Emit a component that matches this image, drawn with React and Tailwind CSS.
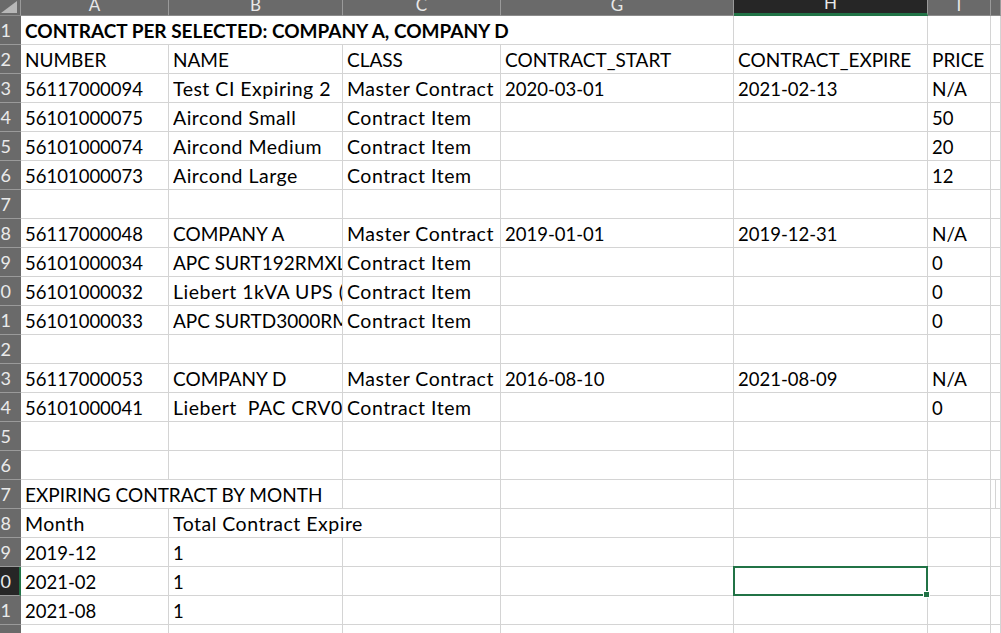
import React from 'react';

const FONT = "font-['Lato','Liberation_Sans',sans-serif]";

const colHeads = [
  { label: 'A', w: 'w-[148px]' },
  { label: 'B', w: 'w-[174px]' },
  { label: 'C', w: 'w-[158px]' },
  { label: 'G', w: 'w-[233px]' },
  { label: 'H', w: 'w-[194px]', selected: true },
  { label: 'I', w: 'w-[63px]' },
  { label: '', w: 'flex-1' },
];

const W = colHeads.map((c) => c.w);

const plain = (vals) => vals.map((v, i) => ({ text: v, w: W[i] }));

const rows = [
  [
    { text: 'CONTRACT PER SELECTED: COMPANY A, COMPANY D', w: 'w-[713px]', bold: true },
    { text: '', w: W[4] },
    { text: '', w: W[5] },
    { text: '', w: W[6] },
  ],
  plain(['NUMBER', 'NAME', 'CLASS', 'CONTRACT_START', 'CONTRACT_EXPIRE', 'PRICE', '']),
  plain(['56117000094', 'Test CI Expiring 2', 'Master Contract', '2020-03-01', '2021-02-13', 'N/A', '']),
  plain(['56101000075', 'Aircond Small', 'Contract Item', '', '', '50', '']),
  plain(['56101000074', 'Aircond Medium', 'Contract Item', '', '', '20', '']),
  plain(['56101000073', 'Aircond Large', 'Contract Item', '', '', '12', '']),
  plain(['', '', '', '', '', '', '']),
  plain(['56117000048', 'COMPANY A', 'Master Contract', '2019-01-01', '2019-12-31', 'N/A', '']),
  plain(['56101000034', 'APC SURT192RMXLT2U', 'Contract Item', '', '', '0', '']),
  plain(['56101000032', 'Liebert 1kVA UPS (GXT4-1000RT230)', 'Contract Item', '', '', '0', '']),
  plain(['56101000033', 'APC SURTD3000RMXLI', 'Contract Item', '', '', '0', '']),
  plain(['', '', '', '', '', '', '']),
  plain(['56117000053', 'COMPANY D', 'Master Contract', '2016-08-10', '2021-08-09', 'N/A', '']),
  plain(['56101000041', 'Liebert\u00a0 PAC CRV035RA', 'Contract Item', '', '', '0', '']),
  plain(['', '', '', '', '', '', '']),
  plain(['', '', '', '', '', '', '']),
  [
    { text: 'EXPIRING CONTRACT BY MONTH', w: 'w-[322px]' },
    ...plain(['', '', '', '', '', '']).map((c, i) => ({ ...c, w: W[i + 2] })),
  ],
  [
    { text: 'Month', w: W[0] },
    { text: 'Total Contract Expire', w: 'w-[332px]' },
    ...plain(['', '', '', '']).map((c, i) => ({ ...c, w: W[i + 3] })),
  ],
  plain(['2019-12', '1', '', '', '', '', '']),
  plain(['2021-02', '1', '', '', '', '', '']),
  plain(['2021-08', '1', '', '', '', '', '']),
  plain(['', '', '', '', '', '', '']),
];

// Calibri has narrow digits and roomy lowercase, so size the stand-in font per kind of text
function textClass(t) {
  if (/^[\d\-]+$/.test(t)) return 'text-[18.5px]';
  if (!/[a-z]/.test(t)) return 'text-[19px]';
  return 'text-[19.5px] tracking-[0.5px]';
}

function Cell({ cell, selected }) {
  return (
    <div className={`${cell.w} relative h-[29px] shrink-0 border-r border-b border-[#d4d4d4] pl-[4px] pt-[3px]`}>
      <span
        className={`block w-full h-[24px] overflow-hidden whitespace-nowrap text-black leading-[24px] ${textClass(cell.text)} ${
          cell.bold ? 'font-bold' : ''
        }`}
      >
        {cell.text}
      </span>
      {selected && (
        <div className="absolute -left-[1px] -top-[1px] -right-[1px] -bottom-[1px] border-2 border-[#217346] z-10">
          <div className="absolute -right-[4px] -bottom-[4px] w-[7px] h-[7px] bg-[#217346] border border-white"></div>
        </div>
      )}
    </div>
  );
}

export default function App() {
  return (
    <div className={`w-[1001px] h-[633px] overflow-hidden bg-white ${FONT}`}>
      {/* column header bar */}
      <div className="flex h-[16px]">
        <div className="w-[21px] shrink-0 bg-[#6a6a6a] border-b border-[#8c8c8c] border-r border-r-[#9a9a9a] relative">
          <svg width="20" height="15" className="absolute left-0 top-0">
            <polygon points="1,13 17,13 17,1" fill="#b8b8b8" />
          </svg>
        </div>
        {colHeads.map((c, i) => (
          <div
            key={i}
            className={`${c.w} shrink-0 h-[16px] flex items-end justify-center overflow-hidden border-r border-[#9a9a9a] ${
              c.selected ? 'bg-[#262626] border-b-[3px] border-b-[#217346]' : 'bg-[#6a6a6a] border-b border-b-[#8c8c8c]'
            }`}
          >
            <span className="text-[#e8e8e8] text-[17px] leading-none mb-[2px]">{c.label}</span>
          </div>
        ))}
      </div>

      {rows.map((row, r) => {
        const n = r + 1;
        const sel = n === 20;
        return (
          <div key={n} className="flex">
            <div
              className={`w-[21px] h-[29px] shrink-0 flex items-center justify-end overflow-hidden border-b ${
                sel ? 'bg-[#262626] border-[#9a9a9a] border-r-2 border-r-[#217346] pr-[8px]' : 'bg-[#6a6a6a] border-[#9a9a9a] pr-[10px]'
              }`}
            >
              <span className="text-[#eaeaea] text-[18px] leading-none whitespace-nowrap">{n}</span>
            </div>
            {row.map((cell, i) => (
              <Cell key={i} cell={cell} selected={sel && i === 4} />
            ))}
          </div>
        );
      })}
    </div>
  );
}
